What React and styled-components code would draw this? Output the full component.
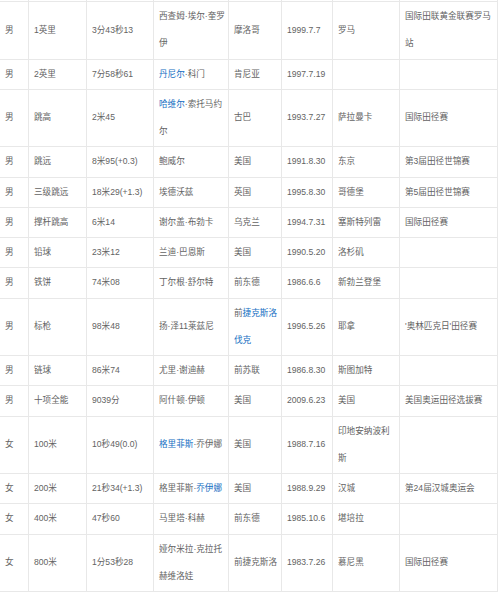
import styled, { createGlobalStyle } from "styled-components";

const GlobalStyle = createGlobalStyle`
  html, body {
    margin: 0;
    padding: 0;
    background: #ffffff;
  }
  body {
    font-family: "Liberation Sans", "Noto Sans CJK SC", Arial, sans-serif;
  }
`;

const widths = [29, 58, 67, 75, 53, 51, 67, 98];

const records = [
  ["男", "1英里", "3分43秒13", "西查姆·埃尔·奎罗伊", "摩洛哥", "1999.7.7", "罗马", "国际田联黄金联赛罗马站"],
  ["男", "2英里", "7分58秒61", [{ link: "丹尼尔" }, "·科门"], "肯尼亚", "1997.7.19", "", ""],
  ["男", "跳高", "2米45", [{ link: "哈维尔" }, "·索托马约尔"], "古巴", "1993.7.27", "萨拉曼卡", "国际田径赛"],
  ["男", "跳远", "8米95(+0.3)", "鲍威尔", "美国", "1991.8.30", "东京", "第3届田径世锦赛"],
  ["男", "三级跳远", "18米29(+1.3)", "埃德沃兹", "英国", "1995.8.30", "哥德堡", "第5届田径世锦赛"],
  ["男", "撑杆跳高", "6米14", "谢尔盖·布勃卡", "乌克兰", "1994.7.31", "塞斯特列雷", "国际田径赛"],
  ["男", "铅球", "23米12", "兰迪·巴恩斯", "美国", "1990.5.20", "洛杉矶", ""],
  ["男", "铁饼", "74米08", "丁尔根·舒尔特", "前东德", "1986.6.6", "新勃兰登堡", ""],
  ["男", "标枪", "98米48", "扬·泽11莱兹尼", ["前", { link: "捷克斯洛伐克" }], "1996.5.26", "耶拿", "'奥林匹克日'田径赛"],
  ["男", "链球", "86米74", "尤里·谢迪赫", "前苏联", "1986.8.30", "斯图加特", ""],
  ["男", "十项全能", "9039分", "阿什顿·伊顿", "美国", "2009.6.23", "美国", "美国奥运田径选拔赛"],
  ["女", "100米", "10秒49(0.0)", [{ link: "格里菲斯" }, "·乔伊娜"], "美国", "1988.7.16", "印地安纳波利斯", ""],
  ["女", "200米", "21秒34(+1.3)", ["格里菲斯·", { link: "乔伊娜" }], "美国", "1988.9.29", "汉城", "第24届汉城奥运会"],
  ["女", "400米", "47秒60", "马里塔·科赫", "前东德", "1985.10.6", "堪培拉", ""],
  ["女", "800米", "1分53秒28", "娅尔米拉·克拉托赫维洛娃", "前捷克斯洛", "1983.7.26", "慕尼黑", "国际田径赛"],
];

const renderContent = (value) => {
  if (!Array.isArray(value)) return value;
  return value.map((part, i) =>
    typeof part === "string" ? (
      <span key={i}>{part}</span>
    ) : (
      <Link key={i}>{part.link}</Link>
    )
  );
};

const App = () => {
  return (
    <>
      <GlobalStyle />
      <Table>
        <colgroup>
          {widths.map((w, i) => (
            <col key={i} style={{ width: w }} />
          ))}
        </colgroup>
        <tbody>
          <StubRow>
            {widths.map((_, i) => (
              <StubCell key={i} />
            ))}
          </StubRow>
          {records.map((row, r) => (
            <tr key={r}>
              {row.map((value, c) => (
                <Cell key={c}>{renderContent(value)}</Cell>
              ))}
            </tr>
          ))}
        </tbody>
      </Table>
    </>
  );
};

const Table = styled.table`
  table-layout: fixed;
  border-collapse: collapse;
  width: 498px;
  margin-left: -1px;
  font-size: 8.6px;
  color: #636363;
`;

const StubRow = styled.tr`
  height: 1px;
`;

const StubCell = styled.td`
  padding: 0;
  height: 1px;
  border: 1px solid #e8e8e8;
  border-top: none;
  font-size: 0;
  line-height: 0;
`;

const Cell = styled.td`
  padding: 1px 1px 1px 5px;
  line-height: 27.25px;
  border: 1px solid #e8e8e8;
  vertical-align: middle;
  word-break: break-all;
`;

const Link = styled.span`
  color: #136ec2;
`;

export default App;
